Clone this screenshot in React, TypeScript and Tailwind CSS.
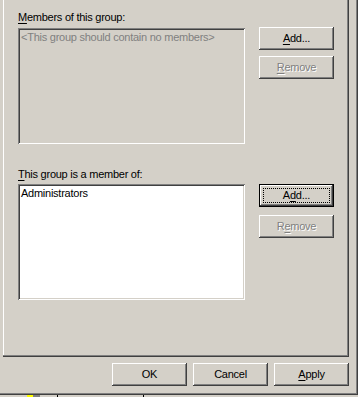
import React from "react";

const U = ({ children }: { children: React.ReactNode }) => (
  <span className="underline underline-offset-[2px] decoration-1">{children}</span>
);

const Btn = ({
  children,
  disabled,
  def,
}: {
  children: React.ReactNode;
  disabled?: boolean;
  def?: boolean;
}) => (
  <div
    className={
      def
        ? "relative w-[75px] h-[23px] flex items-center justify-center pb-px shadow-[inset_0_0_0_1px_#000,inset_-2px_-2px_#404040,inset_2px_2px_#fff,inset_-3px_-3px_#808080]"
        : "relative w-[75px] h-[23px] flex items-center justify-center pb-px shadow-[inset_-1px_-1px_#404040,inset_1px_1px_#fff,inset_-2px_-2px_#808080,inset_2px_2px_#d4d0c8]"
    }
  >
    <span className={disabled ? "text-[#808080] [text-shadow:1px_1px_0_#fff]" : "text-black"}>{children}</span>
    {def && <div className="absolute inset-[4px] border border-dotted border-black" />}
  </div>
);

const ListBox = ({ children, white }: { children: React.ReactNode; white?: boolean }) => (
  <div
    className={
      (white ? "bg-white " : "bg-[#d4d0c8] ") +
      "w-[227px] h-[116px] pl-[3px] pt-[3px] shadow-[inset_1px_1px_#808080,inset_-1px_-1px_#fff,inset_2px_2px_#404040,inset_-2px_-2px_#d4d0c8]"
    }
  >
    {children}
  </div>
);

export default function App() {
  return (
    <div className="w-[358px] h-[397px] bg-[#d4d0c8] font-['Liberation_Sans',Arial,sans-serif] text-[11px] leading-[13px] tracking-[-0.25px] text-black overflow-hidden">
      <div className="h-[395px] w-[358px] flex flex-col shadow-[inset_-1px_-1px_#404040,inset_-2px_-2px_#808080]">
        <div className="ml-[3px] w-[346px] h-[357px] pl-[15px] pt-[11px] shadow-[inset_-1px_-1px_#404040,inset_-2px_-2px_#808080,inset_1px_0_#fff]">
          <div className="flex gap-[14px]">
            <div className="flex flex-col w-[227px]">
              <div className="h-[13px]">
                <U>M</U>embers of this group:
              </div>
              <div className="mt-[4px]">
                <ListBox>
                  <span className="text-[#808080]">&lt;This group should contain no members&gt;</span>
                </ListBox>
              </div>
            </div>
            <div className="flex flex-col gap-[6px] pt-[16px]">
              <Btn>
                <U>A</U>dd...
              </Btn>
              <Btn disabled>
                <U>R</U>emove
              </Btn>
            </div>
          </div>
          <div className="flex gap-[14px] mt-[24px]">
            <div className="flex flex-col w-[227px]">
              <div className="h-[13px]">
                <U>T</U>his group is a member of:
              </div>
              <div className="mt-[3px]">
                <ListBox white>
                  <span>Administrators</span>
                </ListBox>
              </div>
            </div>
            <div className="flex flex-col gap-[8px] pt-[16px]">
              <Btn def>
                A<U>d</U>d...
              </Btn>
              <Btn disabled>
                R<U>e</U>move
              </Btn>
            </div>
          </div>
        </div>
        <div className="flex justify-end gap-[6px] mt-[6px] pr-[9px]">
          <Btn>OK</Btn>
          <Btn>Cancel</Btn>
          <Btn>
            <U>A</U>pply
          </Btn>
        </div>
      </div>
      <div className="relative h-[2px] w-[358px]">
        <div className="absolute left-[27px] top-0 w-[6px] h-[2px] bg-[#ffff00]" />
        <div className="absolute left-[33px] top-0 w-[7px] h-[2px] bg-[#808080]" />
        <div className="absolute left-[57px] top-0 w-px h-[2px] bg-black" />
        <div className="absolute left-[143px] top-0 w-px h-[2px] bg-black" />
      </div>
    </div>
  );
}
